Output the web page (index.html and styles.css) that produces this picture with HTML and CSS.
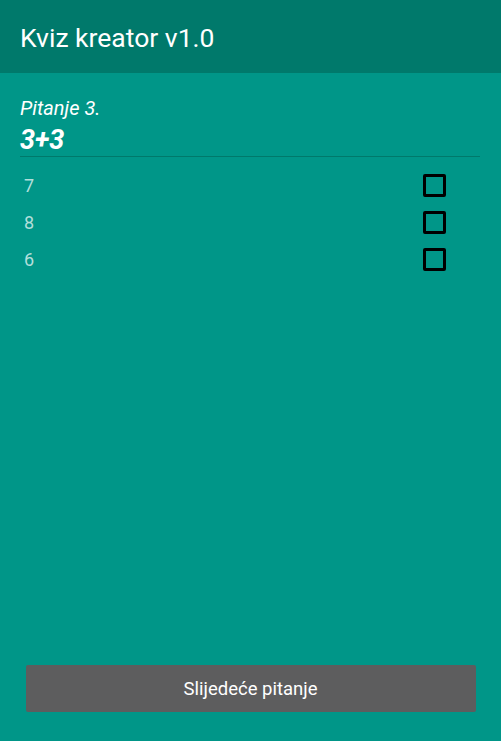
FILE: index.html
```html
<!DOCTYPE html>
<html>
<head>
<meta charset="utf-8">
<link rel="stylesheet" href="styles.css">
</head>
<body>
<div class="app">
  <header class="toolbar">Kviz kreator v1.0</header>
  <main class="content">
    <div class="question-label">Pitanje 3.</div>
    <div class="question">3+3</div>
    <div class="divider"></div>
    <ul class="answers">
      <li class="answer"><span>7</span><span class="box"></span></li>
      <li class="answer"><span>8</span><span class="box"></span></li>
      <li class="answer"><span>6</span><span class="box"></span></li>
    </ul>
    <div class="spacer"></div>
    <button class="next">Slijedeće pitanje</button>
  </main>
</div>
</body>
</html>
```
FILE: styles.css
```css
* { box-sizing: border-box; }
html, body { margin: 0; padding: 0; height: 100%; }
body {
  font-family: Roboto, "Noto Sans", sans-serif;
  background: #009688;
}
.app {
  display: flex;
  flex-direction: column;
  height: 100vh;
}
.toolbar {
  height: 73px;
  background: #00796b;
  color: #fff;
  font-size: 26.5px;
  line-height: 1;
  padding: 25px 20px 0;
  flex: none;
}
.content {
  flex: 1;
  display: flex;
  flex-direction: column;
  padding: 23px 21px 29px 20px;
}
.question-label {
  color: #fff;
  font-style: italic;
  font-size: 20px;
  line-height: 24px;
}
.question {
  color: #fff;
  font-style: italic;
  font-weight: bold;
  font-size: 27px;
  line-height: 30px;
  margin-top: 5px;
}
.divider {
  height: 1px;
  background: #00796b;
  margin-top: 1px;
}
.answers {
  list-style: none;
  margin: 0;
  padding: 0 34px 0 4px;
  margin-top: 10px;
}
.answer {
  display: flex;
  justify-content: space-between;
  align-items: center;
  height: 37px;
  color: #b2dfdb;
  font-size: 18px;
}
.box {
  width: 23px;
  height: 23px;
  border: 3px solid #000;
  border-radius: 2px;
}
.spacer { flex: 1; }
.next {
  align-self: center;
  width: 450px;
  height: 47px;
  background: #5d5d5e;
  color: #fff;
  border: none;
  border-radius: 2px;
  font-family: Roboto, "Noto Sans", sans-serif;
  font-size: 18.5px;
  margin-left: 1px;
}
```
